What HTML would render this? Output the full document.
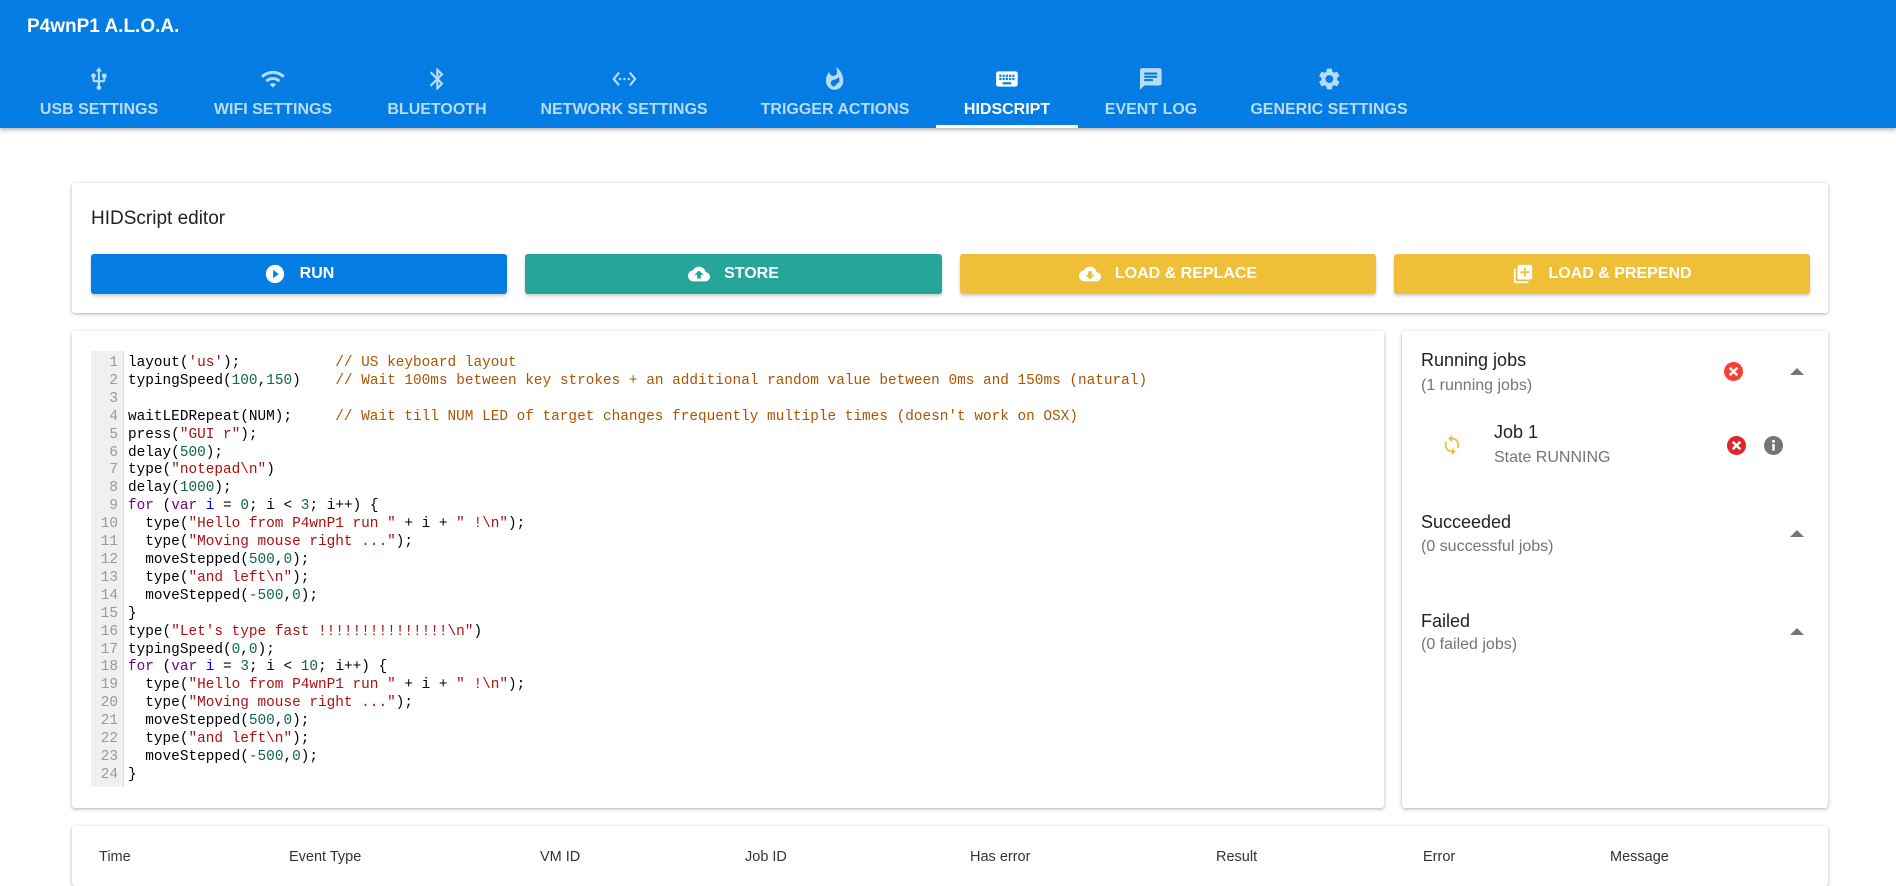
<!DOCTYPE html>
<html><head><meta charset="utf-8"><style>
*{box-sizing:border-box;margin:0;padding:0}
body{width:1896px;height:868px;overflow:hidden;background:#fff;font-family:"Liberation Sans",Arial,sans-serif;position:relative}
.hdr{position:absolute;left:0;top:0;width:1896px;height:128px;background:#037de3;box-shadow:0 2px 4px rgba(0,0,0,.3)}
.title{position:absolute;left:27px;top:16px;color:#fff;font-size:19px;font-weight:bold}
.tab{position:absolute;top:66px;transform:translateX(-50%);text-align:center;color:rgba(255,255,255,.72);font-size:16px;font-weight:bold;white-space:nowrap}
.tab svg{display:block;margin:0 auto 9px;width:26px;height:26px;fill:rgba(255,255,255,.72)}
.tab.act{color:#fff}.tab.act svg{fill:#fff}
.ul{position:absolute;left:936px;top:125px;width:142px;height:3px;background:#fff}
.card{position:absolute;background:#fff;border-radius:3px;box-shadow:0 1px 4px rgba(0,0,0,.22),0 1px 2px rgba(0,0,0,.12)}
.btn{position:absolute;top:254px;height:40px;border-radius:3px;color:#fff;font-weight:bold;font-size:16px;display:flex;align-items:center;justify-content:center;box-shadow:0 2px 3px rgba(0,0,0,.2)}
.btn svg{width:22px;height:22px;fill:#fff;margin-right:14px}
.code{position:absolute;left:91px;top:355px;width:1290px;height:436px;font-family:"Liberation Mono",monospace;font-size:14.4px;line-height:17.9px;white-space:pre;color:#000}
.gut{position:absolute;left:0;top:-4px;padding-top:4px;width:33px;height:436px;background:#f0f0f0;border-right:1px solid #ddd;text-align:right;padding-right:5px;color:#999}
.src{position:absolute;left:37px;top:0}
.c{color:#a50}.s{color:#a11}.n{color:#164}.k{color:#708}.v{color:#00f}
.jt{position:absolute;font-size:18px;color:#222}
.js{position:absolute;font-size:16px;color:#757575}
.arr{position:absolute;width:0;height:0;border-left:7px solid transparent;border-right:7px solid transparent;border-bottom:7px solid #757575}
.th{position:absolute;top:849px;font-size:14.5px;color:#333}
</style></head><body>
<div class="hdr">
<div class="title">P4wnP1 A.L.O.A.</div>
<div class="tab" style="left:99px"><svg viewBox="0 0 24 24"><path d="M15 7v4h1v2h-3V5h2l-3-4-3 4h2v8H8v-2.07c.7-.37 1.2-1.08 1.2-1.93 0-1.21-.99-2.2-2.2-2.2S4.8 7.79 4.8 9c0 .85.5 1.56 1.2 1.93V13c0 1.11.89 2 2 2h3v3.05c-.71.37-1.2 1.1-1.2 1.95 0 1.22.99 2.2 2.2 2.2s2.2-.98 2.2-2.2c0-.85-.49-1.58-1.2-1.95V15h3c1.11 0 2-.89 2-2v-2h1V7h-4z"/></svg>USB SETTINGS</div>
<div class="tab" style="left:273px"><svg viewBox="0 0 24 24"><path d="M1 9l2 2c4.97-4.97 13.03-4.97 18 0l2-2C16.93 2.93 7.08 2.93 1 9zm8 8l3 3 3-3c-1.65-1.66-4.34-1.66-6 0zm-4-4l2 2c2.76-2.76 7.24-2.76 10 0l2-2C15.14 9.14 8.87 9.14 5 13z"/></svg>WIFI SETTINGS</div>
<div class="tab" style="left:437px"><svg viewBox="0 0 24 24"><path d="M17.71 7.71L12 2h-1v7.59L6.41 5 5 6.41 10.59 12 5 17.59 6.41 19 11 14.41V22h1l5.71-5.71-4.3-4.29 4.3-4.29zM13 5.83l1.88 1.88L13 9.59V5.83zm1.88 10.46L13 18.17v-3.76l1.88 1.88z"/></svg>BLUETOOTH</div>
<div class="tab" style="left:624px"><svg viewBox="0 0 24 24"><path d="M7.77 6.76L6.23 5.48.82 12l5.41 6.52 1.54-1.28L3.42 12l4.35-5.24zM7 13h2v-2H7v2zm10-2h-2v2h2v-2zm-6 2h2v-2h-2v2zm6.77-7.52l-1.54 1.28L20.58 12l-4.35 5.24 1.54 1.28L23.18 12l-5.41-6.52z"/></svg>NETWORK SETTINGS</div>
<div class="tab" style="left:835px"><svg viewBox="0 0 24 24"><path d="M13.5.67s.74 2.65.74 4.8c0 2.06-1.35 3.73-3.41 3.73-2.07 0-3.63-1.67-3.63-3.73l.03-.36C5.21 7.51 4 10.62 4 14c0 4.42 3.58 8 8 8s8-3.58 8-8C20 8.61 17.41 3.8 13.5.67zM11.71 19c-1.78 0-3.22-1.4-3.22-3.14 0-1.62 1.05-2.76 2.81-3.12 1.77-.36 3.6-1.21 4.62-2.58.39 1.29.59 2.65.59 4.040 2.65-2.15 4.8-4.8 4.8z"/></svg>TRIGGER ACTIONS</div>
<div class="tab act" style="left:1007px"><svg viewBox="0 0 24 24"><path d="M20 5H4c-1.1 0-1.99.9-1.99 2L2 17c0 1.1.9 2 2 2h16c1.1 0 2-.9 2-2V7c0-1.1-.9-2-2-2zm-9 3h2v2h-2V8zm0 3h2v2h-2v-2zM8 8h2v2H8V8zm0 3h2v2H8v-2zm-1 2H5v-2h2v2zm0-3H5V8h2v2zm9 7H8v-2h8v2zm0-4h-2v-2h2v2zm0-3h-2V8h2v2zm3 3h-2v-2h2v2zm0-3h-2V8h2v2z"/></svg>HIDSCRIPT</div>
<div class="tab" style="left:1151px"><svg viewBox="0 0 24 24"><path d="M20 2H4c-1.1 0-1.99.9-1.99 2L2 22l4-4h14c1.1 0 2-.9 2-2V4c0-1.1-.9-2-2-2zM6 9h12v2H6V9zm8 5H6v-2h8v2zm4-6H6V6h12v2z"/></svg>EVENT LOG</div>
<div class="tab" style="left:1329px"><svg viewBox="0 0 24 24"><path d="M19.14 12.94c.04-.3.06-.61.06-.94 0-.32-.02-.64-.07-.94l2.03-1.58a.49.49 0 00.12-.61l-1.92-3.32a.49.49 0 00-.59-.22l-2.39.96c-.5-.38-1.03-.7-1.62-.94l-.36-2.54a.48.48 0 00-.48-.41h-3.84c-.24 0-.43.17-.47.41l-.36 2.54c-.59.24-1.13.57-1.62.94l-2.39-.96a.48.48 0 00-.59.22L2.74 8.87c-.12.21-.08.47.12.61l2.03 1.58c-.05.3-.09.63-.09.94s.02.64.07.94l-2.03 1.58a.49.49 0 00-.12.61l1.92 3.32c.12.22.37.29.59.22l2.39-.96c.5.38 1.03.7 1.62.94l.36 2.54c.05.24.24.41.48.41h3.84c.24 0 .44-.17.47-.41l.36-2.54c.59-.24 1.13-.56 1.62-.94l2.39.96c.22.08.47 0 .59-.22l1.92-3.32c.12-.22.07-.47-.12-.61l-2.01-1.58zM12 15.6c-1.98 0-3.6-1.62-3.6-3.6s1.62-3.6 3.6-3.6 3.6 1.62 3.6 3.6-1.62 3.6-3.6 3.6z"/></svg>GENERIC SETTINGS</div>
<div class="ul"></div>
</div>

<div class="card" style="left:72px;top:183px;width:1756px;height:130px"></div>
<div style="position:absolute;left:91px;top:208px;font-size:19px;color:#222">HIDScript editor</div>
<div class="btn" style="left:91px;width:416px;background:#037de3"><svg viewBox="0 0 24 24"><path d="M12 2a10 10 0 100 20 10 10 0 000-20zm-2 14.5v-9l6 4.5-6 4.5z"/></svg>RUN</div>
<div class="btn" style="left:525px;width:417px;background:#26a69a"><svg viewBox="0 0 24 24"><path d="M19.35 10.04A7.49 7.49 0 0012 4C9.11 4 6.6 5.64 5.35 8.04A5.994 5.994 0 000 14c0 3.31 2.69 6 6 6h13c2.76 0 5-2.24 5-5 0-2.64-2.05-4.78-4.65-4.96zM14 13v4h-4v-4H7l5-5 5 5h-3z"/></svg>STORE</div>
<div class="btn" style="left:960px;width:416px;background:#f0bf38"><svg viewBox="0 0 24 24"><path d="M19.35 10.04A7.49 7.49 0 0012 4C9.11 4 6.6 5.64 5.35 8.04A5.994 5.994 0 000 14c0 3.31 2.69 6 6 6h13c2.76 0 5-2.24 5-5 0-2.64-2.05-4.78-4.65-4.96zM17 13l-5 5-5-5h3V9h4v4h3z"/></svg>LOAD &amp; REPLACE</div>
<div class="btn" style="left:1394px;width:416px;background:#f0bf38"><svg viewBox="0 0 24 24"><path d="M4 6H2v14c0 1.1.9 2 2 2h14v-2H4V6zm16-4H8c-1.1 0-2 .9-2 2v12c0 1.1.9 2 2 2h12c1.1 0 2-.9 2-2V4c0-1.1-.9-2-2-2zm-1 9h-4v4h-2v-4H9V9h4V5h2v4h4v2z"/></svg>LOAD &amp; PREPEND</div>

<div class="card" style="left:72px;top:331px;width:1312px;height:477px"></div>
<div class="code"><div class="gut">1
2
3
4
5
6
7
8
9
10
11
12
13
14
15
16
17
18
19
20
21
22
23
24</div><div class="src">layout(<span class="s">'us'</span>);           <span class="c">// US keyboard layout</span>
typingSpeed(<span class="n">100</span>,<span class="n">150</span>)    <span class="c">// Wait 100ms between key strokes + an additional random value between 0ms and 150ms (natural)</span>

waitLEDRepeat(NUM);     <span class="c">// Wait till NUM LED of target changes frequently multiple times (doesn't work on OSX)</span>
press(<span class="s">"GUI r"</span>);
delay(<span class="n">500</span>);
type(<span class="s">"notepad\n"</span>)
delay(<span class="n">1000</span>);
<span class="k">for</span> (<span class="k">var</span> <span class="v">i</span> = <span class="n">0</span>; i &lt; <span class="n">3</span>; i++) {
  type(<span class="s">"Hello from P4wnP1 run "</span> + i + <span class="s">" !\n"</span>);
  type(<span class="s">"Moving mouse right ..."</span>);
  moveStepped(<span class="n">500</span>,<span class="n">0</span>);
  type(<span class="s">"and left\n"</span>);
  moveStepped(<span class="n">-500</span>,<span class="n">0</span>);
}
type(<span class="s">"Let's type fast !!!!!!!!!!!!!!!\n"</span>)
typingSpeed(<span class="n">0</span>,<span class="n">0</span>);
<span class="k">for</span> (<span class="k">var</span> <span class="v">i</span> = <span class="n">3</span>; i &lt; <span class="n">10</span>; i++) {
  type(<span class="s">"Hello from P4wnP1 run "</span> + i + <span class="s">" !\n"</span>);
  type(<span class="s">"Moving mouse right ..."</span>);
  moveStepped(<span class="n">500</span>,<span class="n">0</span>);
  type(<span class="s">"and left\n"</span>);
  moveStepped(<span class="n">-500</span>,<span class="n">0</span>);
}</div></div>

<div class="card" style="left:1402px;top:331px;width:426px;height:477px"></div>
<div class="jt" style="left:1421px;top:350px">Running jobs</div>
<div class="js" style="left:1421px;top:377px">(1 running jobs)</div>
<svg style="position:absolute;left:1724px;top:362px" width="19" height="19" viewBox="0 0 20 20"><circle cx="10" cy="10" r="10" fill="#f44336"/><path d="M6 6l8 8M14 6l-8 8" stroke="#fff" stroke-width="2.6"/></svg>
<div class="arr" style="left:1790px;top:368px"></div>
<svg style="position:absolute;left:1441px;top:434px" width="22" height="22" viewBox="0 0 24 24"><path fill="#f0bf38" d="M12 4V1L8 5l4 4V6c3.31 0 6 2.69 6 6 0 1.01-.25 1.97-.7 2.8l1.46 1.46A7.93 7.93 0 0020 12c0-4.42-3.58-8-8-8zm0 14c-3.31 0-6-2.69-6-6 0-1.01.25-1.97.7-2.8L5.24 7.74A7.93 7.93 0 004 12c0 4.42 3.58 8 8 8v3l4-4-4-4v3z"/></svg>
<div class="jt" style="left:1494px;top:422px">Job 1</div>
<div class="js" style="left:1494px;top:449px">State RUNNING</div>
<svg style="position:absolute;left:1727px;top:436px" width="19" height="19" viewBox="0 0 20 20"><circle cx="10" cy="10" r="10" fill="#e0242a"/><path d="M6 6l8 8M14 6l-8 8" stroke="#fff" stroke-width="2.6"/></svg>
<svg style="position:absolute;left:1764px;top:436px" width="19" height="19" viewBox="0 0 20 20"><circle cx="10" cy="10" r="10" fill="#757575"/><rect x="8.7" y="8.5" width="2.6" height="7" fill="#fff"/><circle cx="10" cy="5.6" r="1.5" fill="#fff"/></svg>
<div class="jt" style="left:1421px;top:512px">Succeeded</div>
<div class="js" style="left:1421px;top:538px">(0 successful jobs)</div>
<div class="arr" style="left:1790px;top:530px"></div>
<div class="jt" style="left:1421px;top:611px">Failed</div>
<div class="js" style="left:1421px;top:636px">(0 failed jobs)</div>
<div class="arr" style="left:1790px;top:628px"></div>

<div class="card" style="left:72px;top:826px;width:1756px;height:60px"></div>
<div class="th" style="left:99px">Time</div>
<div class="th" style="left:289px">Event Type</div>
<div class="th" style="left:540px">VM ID</div>
<div class="th" style="left:745px">Job ID</div>
<div class="th" style="left:970px">Has error</div>
<div class="th" style="left:1216px">Result</div>
<div class="th" style="left:1423px">Error</div>
<div class="th" style="left:1610px">Message</div>
</body></html>
